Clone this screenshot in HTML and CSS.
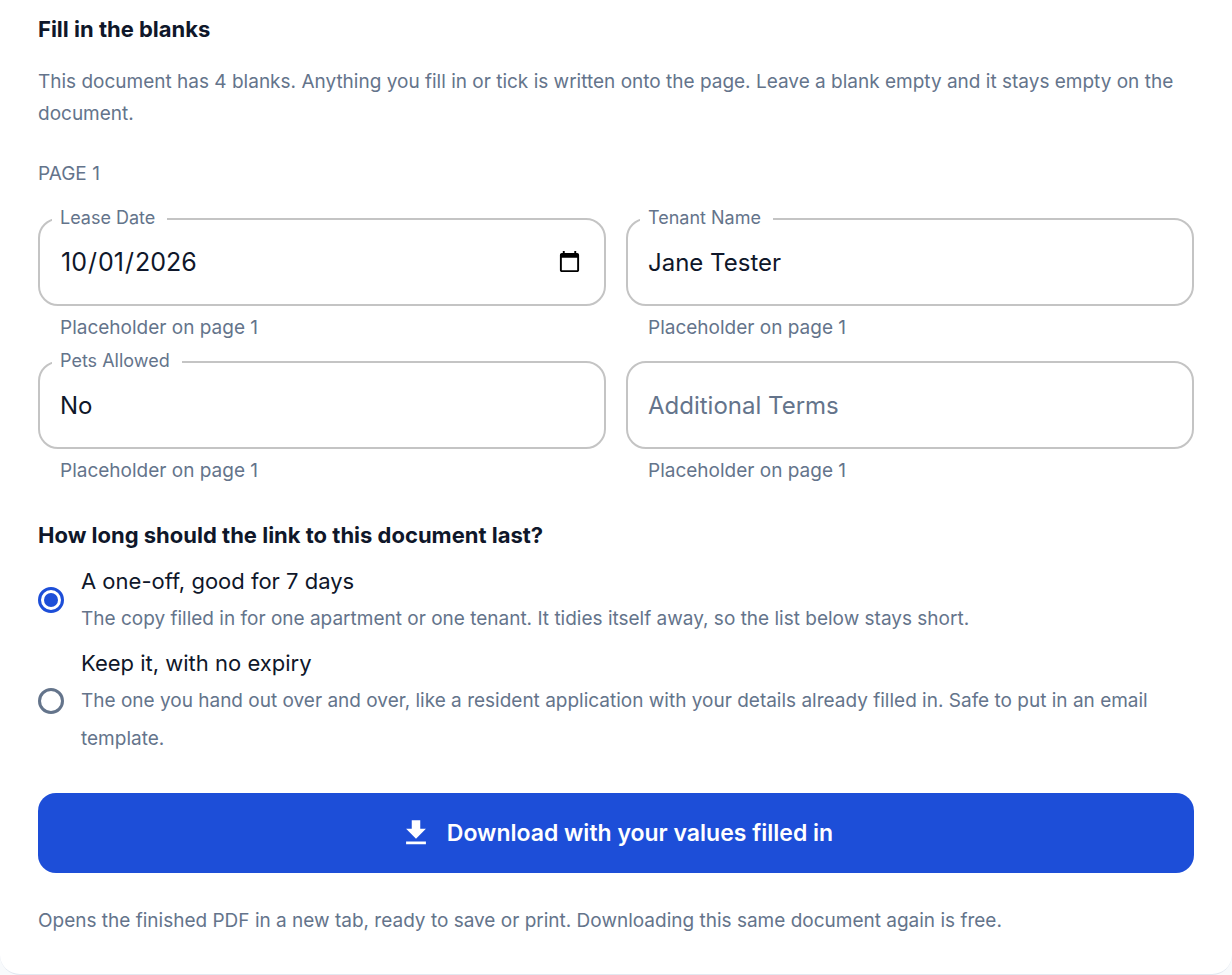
FILE: index.html
```html
<!DOCTYPE html>
<html lang="en">
<head>
    <meta charset="UTF-8">
    <meta name="viewport" content="width=device-width, initial-scale=1.0">
    <title>Fill in the blanks</title>
    <link rel="stylesheet" href="styles.css">
</head>
<body>

<form class="card">
    <h2>Fill in the blanks</h2>
    <p class="intro">This document has 4 blanks. Anything you fill in or tick is written onto the page. Leave a blank empty and it stays empty on the document.</p>

    <h3 class="page-label">PAGE 1</h3>
    <div class="fields">
        <div class="field">
            <label for="leaseDate">Lease Date</label>
            <input type="date" id="leaseDate" value="2026-10-01" aria-describedby="leaseDateHelp">
            <p class="helper" id="leaseDateHelp">Placeholder on page 1</p>
        </div>
        <div class="field">
            <label for="tenantName">Tenant Name</label>
            <input type="text" id="tenantName" value="Jane Tester" aria-describedby="tenantNameHelp">
            <p class="helper" id="tenantNameHelp">Placeholder on page 1</p>
        </div>
        <div class="field">
            <label for="petsAllowed">Pets Allowed</label>
            <input type="text" id="petsAllowed" value="No" aria-describedby="petsAllowedHelp">
            <p class="helper" id="petsAllowedHelp">Placeholder on page 1</p>
        </div>
        <div class="field">
            <input type="text" id="additionalTerms" placeholder="Additional Terms" aria-label="Additional Terms" aria-describedby="additionalTermsHelp">
            <p class="helper" id="additionalTermsHelp">Placeholder on page 1</p>
        </div>
    </div>

    <h2 id="expiryTitle">How long should the link to this document last?</h2>
    <div class="options" role="radiogroup" aria-labelledby="expiryTitle">
        <label class="option">
            <input type="radio" name="expiry" value="week" checked>
            <span class="option-text">
                <span>A one-off, good for 7 days</span>
                <span class="option-note">The copy filled in for one apartment or one tenant. It tidies itself away, so the list below stays short.</span>
            </span>
        </label>
        <label class="option">
            <input type="radio" name="expiry" value="never">
            <span class="option-text">
                <span>Keep it, with no expiry</span>
                <span class="option-note">The one you hand out over and over, like a resident application with your details already filled in. Safe to put in an email template.</span>
            </span>
        </label>
    </div>

    <button type="submit" class="download-btn">
        <svg viewBox="0 0 24 24" aria-hidden="true"><path d="M5 20h14v-2H5v2zM19 9h-4V3H9v6H5l7 7 7-7z"/></svg>
        Download with your values filled in
    </button>
    <p class="footnote">Opens the finished PDF in a new tab, ready to save or print. Downloading this same document again is free.</p>
</form>

</body>
</html>
```
FILE: styles.css
```css
* {
    box-sizing: border-box;
}
body {
    margin: 0;
    background-color: #f8fafc;
    color: #0f172a;
    font-family: Inter, "Liberation Sans", sans-serif;
    font-size: 22px;
}
h2, h3, p {
    margin: 0;
}
h2 {
    font-size: 22px;
    font-weight: 700;
    line-height: 36px;
}
.card {
    padding: 11px 38px 37px;
    background-color: #fff;
    border-bottom: 1px solid #e2e8f0;
    border-radius: 0 0 20px 20px;
}
.intro, .page-label, .helper, .footnote {
    color: #64748b;
    font-size: 19px;
    font-weight: 400;
    line-height: 32px;
}
.intro {
    margin: 19px 0 28px;
}
.page-label {
    margin-bottom: 28px;
}
.fields {
    display: grid;
    grid-template-columns: 1fr 1fr;
    gap: 17px 20px;
    margin-bottom: 30px;
}
.field {
    position: relative;
}
/* sits over the top border and cuts the notch */
.field label {
    position: absolute;
    top: -12px;
    left: 14px;
    padding: 0 12px 0 8px;
    background-color: #fff;
    color: #64748b;
    font-size: 18px;
    line-height: 24px;
}
.field input {
    display: block;
    width: 100%;
    height: 88px;
    padding: 0 20px;
    border: 2px solid #c4c4c4;
    border-radius: 20px;
    background-color: #fff;
    color: #0f172a;
    font-family: inherit;
    font-size: 24px;
}
.field input[type="date"] {
    font-size: 25px;
}
.field input::placeholder {
    color: #64748b;
}
.field input:focus {
    border-color: #1d4ed8;
    outline: none;
}
.helper {
    margin-top: 6px;
    padding: 0 22px;
}
.options {
    display: flex;
    flex-direction: column;
    gap: 6px;
    margin: 9px 0 35px;
}
.option {
    display: flex;
    align-items: center;
    gap: 17px;
    line-height: 38px;
    cursor: pointer;
}
.option input {
    appearance: none;
    flex: none;
    display: grid;
    place-content: center;
    width: 26px;
    height: 26px;
    margin: 0;
    border: 3px solid #64748b;
    border-radius: 50%;
    cursor: pointer;
}
.option input:checked {
    border-color: #1d4ed8;
}
.option input:checked::before {
    content: "";
    width: 14px;
    height: 14px;
    border-radius: 50%;
    background-color: #1d4ed8;
}
.option-text {
    display: flex;
    flex-direction: column;
}
.option-note {
    color: #64748b;
    font-size: 19px;
}
.download-btn {
    display: flex;
    align-items: center;
    justify-content: center;
    gap: 14px;
    width: 100%;
    height: 80px;
    border: none;
    border-radius: 18px;
    background-color: #1d4ed8;
    color: #fff;
    font-family: inherit;
    font-size: 23px;
    font-weight: 600;
    cursor: pointer;
}
.download-btn:hover {
    background-color: #1e40af;
}
.download-btn svg {
    width: 34px;
    height: 34px;
    fill: currentColor;
}
.footnote {
    margin-top: 32px;
}
```
